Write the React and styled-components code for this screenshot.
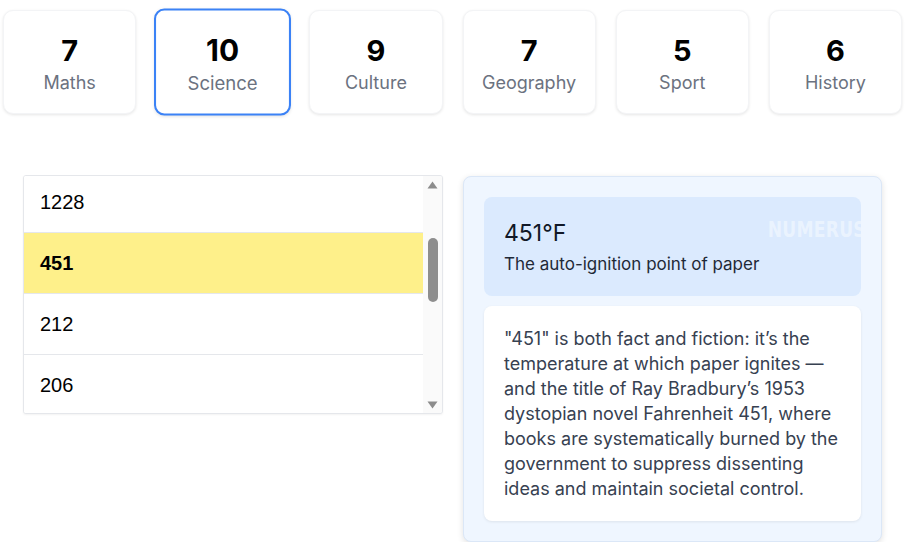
import React from 'react';
import styled, { createGlobalStyle } from 'styled-components';

const categories = [
  { name: 'Maths', count: 7 },
  { name: 'Science', count: 10 },
  { name: 'Culture', count: 9 },
  { name: 'Geography', count: 7 },
  { name: 'Sport', count: 5 },
  { name: 'History', count: 6 },
];

// only the rows that show in the list viewport
const numbers = ['1228', '451', '212', '206'];

const GlobalStyle = createGlobalStyle`
  body {
    margin: 0;
    background: #ffffff;
    font-family: Inter, "Noto Sans", sans-serif;
  }
`;

const Page = styled.div`
  width: 907px;
  padding: 10px 5px 0 3px;
  box-sizing: border-box;
`;

const CardRow = styled.div`
  display: grid;
  grid-template-columns: repeat(6, 1fr);
  gap: 20px;
`;

const Card = styled.div`
  height: 104px;
  box-sizing: border-box;
  padding-top: 4px;
  border-radius: 10px;
  background: #fff;
  border: ${(p) => (p.$active ? '2px solid #3b82f6' : '1px solid #f3f4f6')};
  box-shadow: 0 1px 3px rgba(0, 0, 0, 0.1);
  transform: ${(p) => (p.$active ? 'scale(1.03)' : 'none')};
  display: flex;
  flex-direction: column;
  align-items: center;
  justify-content: center;
  gap: 4px;
`;

const Count = styled.div`
  font-size: 29px;
  font-weight: 700;
  color: #000;
  line-height: 34px;
`;

const Label = styled.div`
  font-size: 18px;
  color: #6b7280;
  line-height: 22px;
`;

const Lower = styled.div`
  display: grid;
  grid-template-columns: 420px 419px;
  gap: 20px;
  align-items: start;
  margin: 61px 0 0 20px;
`;

const ListBox = styled.div`
  height: 239px;
  box-sizing: border-box;
  border: 1px solid #e5e7eb;
  border-radius: 3px;
  box-shadow: 0 1px 2px rgba(0, 0, 0, 0.05);
  display: flex;
  overflow: hidden;
  background: #fff;
`;

const ListViewport = styled.div`
  flex: 1;
  overflow: hidden;
`;

const ListInner = styled.div`
  margin-top: -4px;
`;

const Row = styled.div`
  height: 61px;
  box-sizing: border-box;
  border-bottom: 1px solid #e5e7eb;
  display: flex;
  align-items: center;
  padding-left: 16px;
  font-family: "Liberation Sans", Arial, sans-serif;
  font-size: 20px;
  font-weight: ${(p) => (p.$active ? 700 : 400)};
  background: ${(p) => (p.$active ? '#fef08a' : '#fff')};
  color: #000;
`;

const Scrollbar = styled.div`
  width: 19px;
  background: #fafafa;
  display: flex;
  flex-direction: column;
  align-items: center;
`;

const Arrow = styled.div`
  height: 17px;
  display: flex;
  align-items: center;
  justify-content: center;
  color: #8c8c8c;
`;

const Track = styled.div`
  flex: 1;
  width: 100%;
  display: flex;
  justify-content: center;
  padding-top: 45px;
`;

const Thumb = styled.div`
  width: 10px;
  height: 64px;
  border-radius: 5px;
  background: #8e8e8e;
`;

const Panel = styled.div`
  margin-top: 1px;
  background: #eff6ff;
  border: 1px solid #dbe7f7;
  border-radius: 8px;
  box-shadow: 0 2px 6px rgba(0, 0, 0, 0.12);
  padding: 20px;
  display: flex;
  flex-direction: column;
  gap: 10px;
`;

const Header = styled.div`
  position: relative;
  overflow: hidden;
  background: #dbeafe;
  border-radius: 8px;
  height: 99px;
  box-sizing: border-box;
  padding: 20px 20px 0;
`;

const Watermark = styled.div`
  position: absolute;
  right: -5px;
  top: 20px;
  font-family: "DejaVu Sans", sans-serif;
  font-weight: 700;
  font-size: 22px;
  letter-spacing: 0.3px;
  color: rgba(255, 255, 255, 0.45);
  transform: scaleX(0.78);
  transform-origin: right;
`;

const Title = styled.div`
  font-size: 23px;
  color: #111827;
  line-height: 32px;
`;

const Subtitle = styled.div`
  font-size: 17px;
  color: #1f2937;
  line-height: 24px;
  margin-top: 3px;
`;

const Body = styled.div`
  background: #fff;
  border-radius: 8px;
  box-shadow: 0 1px 3px rgba(0, 0, 0, 0.08);
  padding: 20px;
  font-size: 18px;
  line-height: 25px;
  color: #374151;
`;

const App = () => {
  return (
    <Page>
      <GlobalStyle />
      <CardRow>
        {categories.map((c) => (
          <Card key={c.name} $active={c.name === 'Science'}>
            <Count>{c.count}</Count>
            <Label>{c.name}</Label>
          </Card>
        ))}
      </CardRow>

      <Lower>
        <ListBox>
          <ListViewport>
            <ListInner>
              {numbers.map((n) => (
                <Row key={n} $active={n === '451'}>
                  {n}
                </Row>
              ))}
            </ListInner>
          </ListViewport>
          <Scrollbar>
            <Arrow>
              <svg width="11" height="8" viewBox="0 0 11 8">
                <path d="M5.5 0.5 L10.5 7.5 H0.5 Z" fill="currentColor" />
              </svg>
            </Arrow>
            <Track>
              <Thumb />
            </Track>
            <Arrow>
              <svg width="11" height="8" viewBox="0 0 11 8">
                <path d="M0.5 0.5 H10.5 L5.5 7.5 Z" fill="currentColor" />
              </svg>
            </Arrow>
          </Scrollbar>
        </ListBox>

        <Panel>
          <Header>
            <Watermark>NUMERUS</Watermark>
            <Title>451°F</Title>
            <Subtitle>The auto-ignition point of paper</Subtitle>
          </Header>
          <Body>
            "451" is both fact and fiction: it’s the temperature at which paper
            ignites — and the title of Ray Bradbury’s 1953 dystopian novel
            Fahrenheit 451, where books are systematically burned by the
            government to suppress dissenting ideas and maintain societal
            control.
          </Body>
        </Panel>
      </Lower>
    </Page>
  );
};

export default App;
